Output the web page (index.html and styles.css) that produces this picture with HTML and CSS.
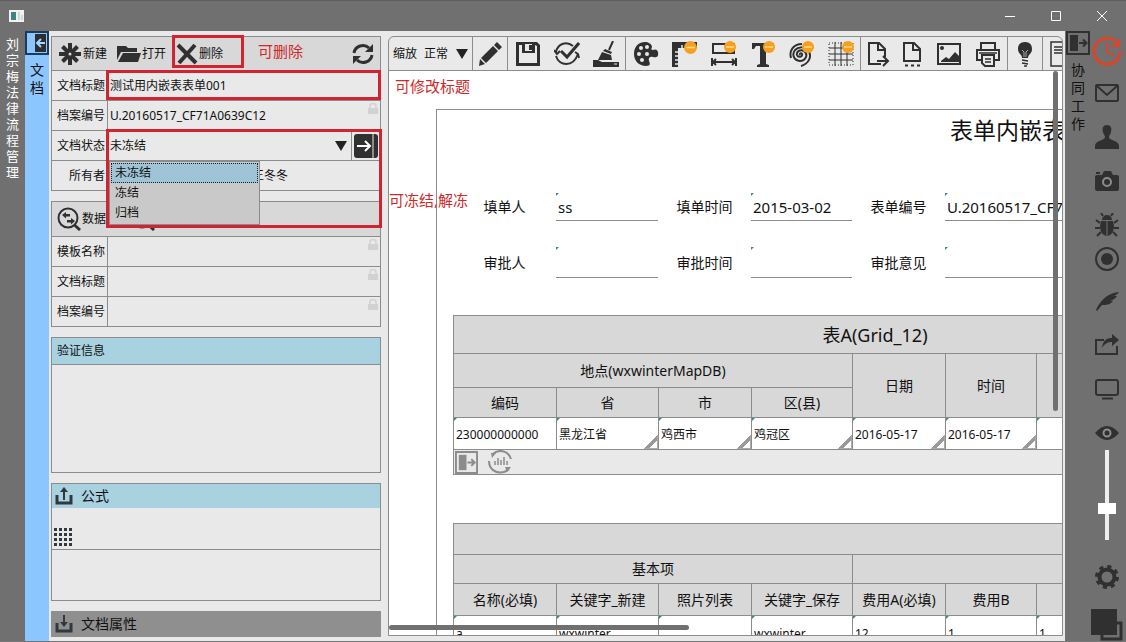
FILE: index.html
```html
<!DOCTYPE html>
<html lang="zh-CN">
<head>
<meta charset="utf-8">
<title>文档</title>
<link rel="stylesheet" href="styles.css">
</head>
<body>
<svg class="defs" aria-hidden="true">
  <symbol id="panel" viewBox="0 0 24 24"><path d="M1 1h22v22H1z" fill="none" stroke="currentColor" stroke-width="2"/><path d="M4 4h8v16H4z" fill="currentColor"/><path d="M13 12h7M17 8.500l3.500 3.500-3.500 3.500" fill="none" stroke="currentColor" stroke-width="2"/></symbol>
  <symbol id="lock" viewBox="0 0 10 11"><path d="M0 5h10v6H0z" fill="currentColor"/><path d="M2 5V3a3 2.500 0 0 1 6 0v2" fill="none" stroke="currentColor" stroke-width="1.500"/></symbol>
  <symbol id="badge" viewBox="0 0 12 12"><circle cx="6" cy="6" r="6" fill="#f6a01e"/><path d="M2 6h8" stroke="#ffd98c" stroke-width="1.500"/></symbol>
  <symbol id="search" viewBox="0 0 24 24"><circle cx="11" cy="11" r="9.500" fill="none" stroke="currentColor" stroke-width="2"/><path d="M17.500 18l5.500 5" stroke="currentColor" stroke-width="3"/><path d="M5 8l4-3v2h4v2.500H9v2zM18 14l-4-3v2h-4v2.500h4v2z" fill="currentColor"/></symbol>
</svg>
<header class="titlebar">
  <svg class="app" viewBox="0 0 15 12"><path d="M0 0h15v12H0z" fill="#f2f2f2"/><path d="M2 2h5v8H2z" fill="#3c8580"/><path d="M9 2h2v8H9zM12 5h2v5h-2z" fill="#cfd8d8"/></svg>
  <div class="winbtns">
    <button aria-label="最小化"><svg viewBox="0 0 12 12"><path d="M1 6.500h10"/></svg></button>
    <button aria-label="最大化"><svg viewBox="0 0 12 12"><path d="M1.500 1.500h9v9h-9z"/></svg></button>
    <button aria-label="关闭"><svg viewBox="0 0 12 12"><path d="M1 1l10 10M11 1L1 11"/></svg></button>
  </div>
</header>
<div class="shell">
  <nav class="rail">刘宗梅法律流程管理</nav>
  <nav class="tabrail">
    <button class="toggle" aria-label="收起"><svg viewBox="0 0 24 24"><path d="M1 1h22v22H1z" fill="none" stroke="#1d3a5c" stroke-width="2"/><path d="M10 3h11v18H10z" fill="#2a2d31"/><path d="M12 12h8M16 8l-4 4 4 4" fill="none" stroke="#a8d4ff" stroke-width="2"/></svg></button>
    <span>文档</span>
  </nav>
  <main class="content">
    <aside class="side">
      <section class="block">
        <div class="tools line">
          <button><svg class="i24" viewBox="0 0 24 24"><path d="M12 1v22M1 12h22M4.500 4.500l15 15M19.500 4.500l-15 15" stroke="currentColor" stroke-width="4"/><circle cx="12" cy="12" r="1.500" fill="#d8d8d8"/></svg>新建</button>
          <button><svg class="i24" viewBox="0 0 24 24"><path d="M0 18V4h9l2 2h9v4H4zM6 11h18l-3 9H1z" fill="currentColor"/></svg>打开</button>
          <button class="del"><svg class="i22" viewBox="0 0 22 22"><path d="M2 2l18 18M19 2L3 20" stroke="currentColor" stroke-width="4"/></svg>删除</button>
          <span class="note">可删除</span>
          <button class="refresh" aria-label="刷新"><svg class="i22" viewBox="0 0 22 22"><path d="M2 10C3 3 12 0 17 5M20 12c-1 7-10 10-15 5" fill="none" stroke="currentColor" stroke-width="3"/><path d="M21 1v8h-8zM1 21v-8h8z" fill="currentColor"/></svg></button>
          <i class="mark mark-del"></i>
        </div>
        <div class="row line"><label for="t1">文档标题</label><input id="t1" value="测试用内嵌表表单001"><i class="mark mark-title"></i></div>
        <div class="row line"><label for="t2">档案编号</label><input id="t2" value="U.20160517_CF71A0639C12"><svg class="lock"><use href="#lock"/></svg></div>
        <div class="row line"><label for="t3">文档状态</label><select id="t3"><option>未冻结</option><option>冻结</option><option>归档</option></select><span class="caret"></span>
          <button class="go" aria-label="执行"><svg viewBox="0 0 24 24"><rect width="24" height="24" rx="3" fill="#303030"/><path d="M3 12h13M11 7l5 5-5 5" fill="none" stroke="#fff" stroke-width="2"/><path d="M19 0v24" stroke="#e9e9e9"/></svg></button>
          <ul class="popup" role="listbox" aria-label="文档状态"><li role="option" aria-selected="true" class="on">未冻结</li><li role="option">冻结</li><li role="option">归档</li></ul>
          <i class="mark mark-state"></i>
        </div>
        <div class="row line"><label for="t4">所有者</label><input id="t4" class="owner" value="王冬冬"></div>
      </section>
      <section class="block">
        <div class="tools data line">
          <button><svg class="i24"><use href="#search"/></svg>数据</button>
          <button aria-label="查询"><svg class="i24"><use href="#search"/></svg></button>
        </div>
        <div class="row line"><label for="d1">模板名称</label><input id="d1"><svg class="lock"><use href="#lock"/></svg></div>
        <div class="row line"><label for="d2">文档标题</label><input id="d2"><svg class="lock"><use href="#lock"/></svg></div>
        <div class="row line"><label for="d3">档案编号</label><input id="d3"><svg class="lock"><use href="#lock"/></svg></div>
      </section>
      <section class="block">
        <h2 class="line">验证信息</h2>
        <div class="verify line"></div>
      </section>
      <section class="block">
        <h2 class="big line"><svg class="i18" viewBox="0 0 18 18"><path d="M2 8v8h14V8" fill="none" stroke="currentColor" stroke-width="3"/><path d="M9 13V4" stroke="currentColor" stroke-width="2"/><path d="M5 5l4-5 4 5z" fill="currentColor"/></svg>公式</h2>
        <div class="formula"><svg class="i18" viewBox="0 0 18 18"><path d="M0 1.500h18M0 6.500h18M0 11.500h18M0 16.500h18" stroke="currentColor" stroke-width="3" stroke-dasharray="3 2"/></svg></div>
        <div class="result line"></div>
      </section>
      <h2 class="big props"><svg class="i18" viewBox="0 0 18 18"><path d="M2 8v8h14V8" fill="none" stroke="currentColor" stroke-width="3"/><path d="M9 0v8" stroke="currentColor" stroke-width="2"/><path d="M5 7l4 5 4-5z" fill="currentColor"/></svg>文档属性</h2>
    </aside>
    <section class="doc">
      <div class="bar">
        <div class="group zoom"><label for="z">缩放</label><select id="z"><option>正常</option></select><span class="caret"></span></div>
        <div class="group"><button class="slim" aria-label="编辑"><svg viewBox="0 0 26 26"><path d="M4 17L16 5l5 5L9 22zM17 4l3-3 5 5-3 3zM3 18l5 5-6 2z" fill="currentColor"/></svg></button></div>
        <div class="group">
          <button aria-label="保存"><svg viewBox="0 0 26 26"><path d="M1 1h21l3 3v21H1zM4 4v18h18V5l-2-1v8H7V4zM10 3v7h7V3z" fill="currentColor" fill-rule="evenodd"/><path d="M14 4h3v5h-3z" fill="currentColor"/></svg></button>
          <button aria-label="校验"><svg viewBox="0 0 26 26"><path d="M2 11C4 2 13 0 19 5M2 15c3 10 17 12 22-2" fill="none" stroke="currentColor" stroke-width="2"/><path d="M0 9l3 4 3-3M21 11l3 2 1 4" fill="none" stroke="currentColor" stroke-width="2"/><path d="M7 10l6 6L25 2" fill="none" stroke="currentColor" stroke-width="3"/></svg></button>
          <button aria-label="清除"><svg viewBox="0 0 26 26"><path d="M20 0l-4 9" stroke="currentColor" stroke-width="2"/><path d="M12 8l7 3-1 2-8-3zM9 11l9 3 1 5H5zM0 19h5l4 2h17v5H0z" fill="currentColor"/><path d="M21 23h3" stroke="#e9e9e9"/></svg></button>
        </div>
        <div class="group">
          <button aria-label="颜色"><svg viewBox="0 0 26 26"><path d="M12 1C5 1 1 6 1 13s5 12 12 12c5 0 4-3 3-5-1-3 1-5 4-4 3 1 6 0 5-5-1-3-3-3-5-2-2 0-2-1-1-3 0-3-4-5-7-5z" fill="currentColor"/><g fill="#e9e9e9"><circle cx="8" cy="7" r="2"/><circle cx="14" cy="6" r="2"/><circle cx="6" cy="13" r="2"/><circle cx="9" cy="19" r="2"/><circle cx="14" cy="13" r="2"/></g></svg></button>
          <button aria-label="标尺"><svg viewBox="0 0 26 26"><path d="M0 1h25v6H6v19H0z" fill="currentColor"/><path d="M3 11h4M3 15h4M3 19h4M3 23h4M10 7V4M14 7V4" stroke="#e9e9e9" stroke-width="1.500"/><use href="#badge" x="12" width="13" height="13"/></svg></button>
          <button aria-label="宽度"><svg viewBox="0 0 26 26"><path d="M2 3h21v9H2zM1 17v8M25 17v8M2 21h22M5 18l-3 3 3 3M21 18l3 3-3 3" fill="none" stroke="currentColor" stroke-width="2"/><use href="#badge" x="13" width="12" height="12"/></svg></button>
          <button aria-label="文字"><svg viewBox="0 0 26 26"><path d="M2 2h22v6h-2l-2-3h-4v18l3 1v2H7v-2l3-1V5H6L4 8H2z" fill="currentColor"/><use href="#badge" x="13" width="12" height="12"/></svg></button>
          <button aria-label="图章"><svg viewBox="0 0 26 26"><path d="M11 14a1 1 0 0 1 2-1c1 3-4 4-5 1-1-4 4-6 7-4 5 4 1 10-4 10-7-1-8-7-5-11 3-3 9-4 13 0 5 7 0 14-7 16M2 17C0 10 4 3 13 3" fill="none" stroke="currentColor" stroke-width="2"/><use href="#badge" x="13" width="12" height="12"/></svg></button>
          <button aria-label="网格"><svg viewBox="0 0 26 26"><path d="M1 7h24M1 13h24M1 19h24M7 1v24M13 1v24M19 1v24" stroke="currentColor"/><path d="M1 2h24v22H1z" fill="none" stroke="currentColor" stroke-dasharray="1 2"/><use href="#badge" x="14" width="12" height="12"/></svg></button>
        </div>
        <div class="group">
          <button class="slim" aria-label="导出"><svg viewBox="0 0 26 26"><path d="M16 23H4V2h10l6 6v8M13 2v7h7M12 20h11M18 15l5 5-5 5" fill="none" stroke="currentColor" stroke-width="2"/></svg></button>
          <button class="slim" aria-label="页面"><svg viewBox="0 0 26 26"><path d="M5 20V2h10l6 6v12zM14 2v7h7" fill="none" stroke="currentColor" stroke-width="2"/><path d="M6 24.500h3M12 24.500h3M18 24.500h3" stroke="currentColor" stroke-width="2"/></svg></button>
          <button aria-label="图片"><svg viewBox="0 0 26 26"><path d="M2 3h22v20H2z" fill="none" stroke="currentColor" stroke-width="2"/><path d="M5 20l5-4 3 2 6-7 4 4v6H5z" fill="currentColor"/><circle cx="6" cy="7" r="2" fill="currentColor"/></svg></button>
          <button aria-label="打印"><svg viewBox="0 0 26 26"><path d="M6 8V2h14v6M6 19H2V9h22v10h-4M7 14h12v11H10l-3-3z" fill="none" stroke="currentColor" stroke-width="2"/><path d="M10 18h6M10 21h6M4 12h18" stroke="currentColor" stroke-width="1.500"/></svg></button>
        </div>
        <div class="group"><button class="slim" aria-label="提示"><svg viewBox="0 0 26 26"><path d="M13 1c-5 0-7 3-7 7 0 5 4 5 4 9h6c0-4 4-4 4-9 0-4-2-7-7-7z" fill="currentColor"/><path d="M10 19l6 1M10 22l6 1M12 25h3" fill="none" stroke="currentColor" stroke-width="1.500"/><path d="M10 9l2 2v5M16 9l-2 2v5" fill="none" stroke="#a8a8a8"/></svg></button></div>
        <div class="group last"><button aria-label="说明"><svg viewBox="0 0 26 26"><path d="M1 1h20v24H1zM4 6h14M4 9h14M4 12h9" fill="none" stroke="currentColor" stroke-width="1.500"/></svg></button></div>
      </div>
      <div class="view">
        <article class="page">
          <h1>表单内嵌表</h1>
          <form class="form">
            <label for="f1">填单人</label><span class="field"><input id="f1" value="ss"></span>
            <label for="f2">填单时间</label><span class="field"><input id="f2" value="2015-03-02"></span>
            <label for="f3">表单编号</label><span class="field"><input id="f3" value="U.20160517_CF71"></span>
            <label for="f4">审批人</label><span class="field"><input id="f4"></span>
            <label for="f5">审批时间</label><span class="field"><input id="f5"></span>
            <label for="f6">审批意见</label><span class="field"><input id="f6"></span>
          </form>
          <table class="grid">
            <colgroup><col class="c103"><col class="c102"><col class="c93"><col class="c101"><col class="c93"><col class="c91"><col></colgroup>
            <thead>
              <tr class="h38"><th colspan="7" class="cap">表A(Grid_12)</th></tr>
              <tr class="h34"><th colspan="4">地点(wxwinterMapDB)</th><th rowspan="2">日期</th><th rowspan="2">时间</th><th rowspan="2"></th></tr>
              <tr class="h30"><th>编码</th><th>省</th><th>市</th><th>区(县)</th></tr>
            </thead>
            <tbody><tr class="h32"><td>230000000000</td><td class="pick">黑龙江省</td><td class="pick">鸡西市</td><td class="pick">鸡冠区</td><td class="pick">2016-05-17</td><td class="pick">2016-05-17</td><td></td></tr></tbody>
            <tfoot><tr class="h25"><th colspan="7"><div class="foot"><button type="button" aria-label="展开"><svg viewBox="0 0 24 24"><use href="#panel"/></svg></button><button type="button" aria-label="图表"><svg viewBox="0 0 24 24"><path d="M5 4C10-1 20 0 23 9M1 11c0 11 12 15 20 8" fill="none" stroke="currentColor" stroke-width="2"/><path d="M7 15v-4M10 15V8M13 15v-5M16 15V7M19 15v-4" stroke="currentColor" stroke-width="1.500"/><path d="M3 3h5L4 8zM17 17h6l-4 5z" fill="currentColor"/></svg></button></div></th></tr></tfoot>
          </table>
          <table class="grid second">
            <colgroup><col class="c103"><col class="c102"><col class="c93"><col class="c101"><col class="c93"><col class="c91"><col></colgroup>
            <thead>
              <tr class="h31"><th colspan="7"></th></tr>
              <tr class="h29"><th colspan="4">基本项</th><th colspan="3"></th></tr>
              <tr class="h32"><th>名称(必填)</th><th>关键字_新建</th><th>照片列表</th><th>关键字_保存</th><th>费用A(必填)</th><th>费用B</th><th></th></tr>
            </thead>
            <tbody><tr class="h34"><td>a</td><td>wxwinter</td><td></td><td>wxwinter</td><td>12</td><td>1</td><td>1</td></tr></tbody>
          </table>
        </article>
        <span class="note note-title">可修改标题</span>
        <span class="note note-state">可冻结,解冻</span>
        <i class="vbar"></i><i class="hbar"></i>
      </div>
    </section>
  </main>
  <nav class="workrail">
    <button class="toggle" aria-label="展开"><svg viewBox="0 0 24 24"><use href="#panel"/></svg></button>
    <span>协同工作</span>
  </nav>
  <nav class="icons">
    <button class="clock" aria-label="时钟"><svg viewBox="0 0 30 30"><path d="M23 5A13 13 0 1 0 28 15" fill="none" stroke="currentColor" stroke-width="3"/><path d="M28 2v9h-9z" fill="currentColor"/><path d="M15 7v9l7 4" fill="none" stroke="currentColor" stroke-width="2"/></svg></button>
    <button aria-label="邮件"><svg viewBox="0 0 24 24"><rect x="1" y="4" width="22" height="16" rx="1" fill="none" stroke="currentColor" stroke-width="2"/><path d="M2 5l10 9 10-9" fill="none" stroke="currentColor" stroke-width="2"/></svg></button>
    <button aria-label="用户"><svg viewBox="0 0 24 24"><path d="M12 0c-4 0-5 3-4 7 0 2 2 3 2 5 0 4-10 3-10 9v3h24v-3c0-6-10-5-10-9 0-2 2-3 2-5 1-4 0-7-4-7z" fill="currentColor"/></svg></button>
    <button aria-label="相机"><svg viewBox="0 0 24 24"><path d="M2 6h5l2-4h7l2 4h4q2 0 2 2v12q0 2-2 2H2q-2 0-2-2V8q0-2 2-2zM1 3h4v2H1z" fill="currentColor"/><circle cx="12" cy="13" r="4" fill="none" stroke="#8c8c8c" stroke-width="2"/></svg></button>
    <button aria-label="调试"><svg viewBox="0 0 24 24"><path d="M7 7a5 5 0 0 1 10 0zM6 8h5.500v15C7 22 5 18 5 13zM18 8h-5.500v15c4.500-1 6.500-5 6.500-10z" fill="currentColor"/><path d="M8 3L6 0M16 3l2-3M5 10L1 7M5 15H0M6 19l-4 4M19 10l4-3M19 15h5M18 19l4 4" stroke="currentColor" stroke-width="2"/></svg></button>
    <button class="short" aria-label="录制"><svg viewBox="0 0 24 24"><circle cx="12" cy="12" r="11" fill="none" stroke="currentColor" stroke-width="2"/><circle cx="12" cy="12" r="6" fill="currentColor"/></svg></button>
    <button aria-label="书写"><svg viewBox="0 0 24 24"><path d="M1 21C4 14 11 4 24 3c-1 2-3 3-5 4h3c-2 3-4 4-7 5h3c-3 4-7 4-11 4l-5 6z" fill="currentColor"/></svg></button>
    <button aria-label="分享"><svg viewBox="0 0 24 24"><path d="M9 7H1v14h21v-8" fill="none" stroke="currentColor" stroke-width="2"/><path d="M7 15c1-8 5-10 10-10V1l7 6-7 6V9c-4 0-7 1-10 6z" fill="currentColor"/></svg></button>
    <button aria-label="屏幕"><svg viewBox="0 0 24 24"><rect x="1" y="3" width="22" height="15" rx="2" fill="none" stroke="currentColor" stroke-width="2"/><path d="M7 21.500h11" stroke="currentColor" stroke-width="2"/></svg></button>
    <button class="eye" aria-label="显示"><svg viewBox="0 0 24 24"><path d="M0 12q12-14 24 0-12 14-24 0z" fill="currentColor"/><circle cx="12" cy="12" r="3.500" fill="none" stroke="#8c8c8c" stroke-width="2"/></svg></button>
    <input class="slider" type="range" aria-label="透明度" min="0" max="100" value="33">
    <button class="gear" aria-label="设置"><svg viewBox="0 0 24 24"><circle cx="12" cy="12" r="7.500" fill="none" stroke="currentColor" stroke-width="4"/><circle cx="12" cy="12" r="10.500" fill="none" stroke="currentColor" stroke-width="3" stroke-dasharray="4.130 4.120"/></svg></button>
    <button class="layers" aria-label="窗口"><svg viewBox="0 0 32 32"><path d="M11 14h19v16H11z" fill="none" stroke="currentColor" stroke-width="3"/><path d="M0 0h26v26H0z" fill="#303030"/></svg></button>
  </nav>
</div>
</body>
</html>
```

FILE: styles.css
```css
* { box-sizing: border-box; }
body {
  margin: 0; height: 100vh; overflow: hidden;
  display: flex; flex-direction: column;
  background: #707070; color: #111;
  font: 12px/18px "Noto Sans", "Noto Sans CJK SC", sans-serif;
}
button, input, select {
  font: inherit; color: inherit; border: 0; padding: 0; margin: 0;
  background: none; appearance: none; outline: 0; border-radius: 0;
}
button { display: flex; align-items: center; justify-content: center; }
svg { display: block; flex: none; }
h1, h2, ul { margin: 0; padding: 0; font-weight: 400; }
.defs { position: absolute; width: 0; height: 0; }

.titlebar { height: 31px; flex: none; display: flex; justify-content: space-between; align-items: center; padding-left: 9px; border-top: 1px solid #5e5e5e; }
.app { width: 15px; height: 12px; }
.winbtns { display: flex; padding-right: 1px; }
.winbtns button { width: 46px; height: 30px; }
.winbtns svg { width: 12px; height: 12px; fill: none; stroke: #fff; }

.shell { flex: 1; display: flex; min-height: 0; border-bottom: 1px solid #777; }
.rail { width: 25px; flex: none; padding: 5px 6px; color: #fff; font-size: 13px; line-height: 16px; word-break: break-all; }
.tabrail, .workrail { width: 24px; flex: none; display: flex; flex-direction: column; align-items: center; font-size: 14px; }
.tabrail { background: #8cc6ff; }
.tabrail span, .workrail span { width: 14px; margin-top: 6px; word-break: break-all; }
.toggle, .toggle svg { width: 24px; height: 24px; }
.workrail { margin-left: 1px; }
.workrail .toggle { color: #303030; }

.content { flex: 1; min-width: 0; display: flex; gap: 7px; padding: 5px 2px; background: #e9e9e9; }
.side { width: 330px; flex: none; color: #111; }
.block { border: solid #8c8c8c; border-width: 0 1px 1px; margin-bottom: 10px; }
.line { border-top: 1px solid #8c8c8c; }
.tools { position: relative; height: 34px; display: flex; align-items: center; gap: 10px; padding: 0 6px; background: #d8d8d8; }
.tools button { gap: 1px; }
.tools svg, .formula, .bar { color: #303030; }
.data { height: 35px; padding-left: 5px; gap: 25px; }
.i24 { width: 24px; height: 24px; }
.i22 { width: 22px; height: 22px; }
.i18 { width: 18px; height: 18px; color: #303840; }
.refresh { margin-left: auto; }
.note { color: #d02828; font-size: 15px; white-space: nowrap; }
.tools .note { margin: -6px 0 0 25px; }
.row { position: relative; height: 30px; display: flex; align-items: stretch; }
.row label { width: 56px; flex: none; padding: 6px 2px 0 0; text-align: right; border-right: 1px solid #8c8c8c; }
.row input, .row select { flex: 1; min-width: 0; padding: 0 2px; }
.row .owner { padding-left: 144px; }
.lock { position: absolute; right: 2px; top: 2px; width: 10px; height: 11px; color: #d2d2d2; }
.caret { align-self: center; border: solid transparent; border-width: 10px 6px 0; border-top-color: #222; }
.go { width: 29px; margin-left: 4px; border-left: 1px solid #8c8c8c; }
.go svg { width: 24px; height: 24px; }
.popup { position: absolute; z-index: 2; left: 57px; top: 30px; width: 151px; list-style: none; background: #c9c9c9; border: 1px solid #8c8c8c; padding: 1px; }
.popup li { padding-left: 4px; line-height: 20px; }
.popup .on { background: #9fc4d6; outline: 1px dotted #123; outline-offset: -1px; }
.mark { position: absolute; z-index: 3; border: 3px solid #d22330; pointer-events: none; }
.mark-del { left: 120px; top: -2px; width: 72px; height: 33px; }
.mark-title { left: 54px; right: -1px; top: -1px; height: 30px; }
.mark-state { left: 54px; right: -2px; top: -2px; height: 99px; }
h2 { height: 27px; display: flex; align-items: center; padding-left: 5px; font-size: 12px; background: #a8d2e0; }
.big { height: 25px; padding-left: 3px; gap: 8px; font-size: 14px; }
.props { height: 26px; padding-left: 4px; background: #8f8f8f; }
.verify { height: 108px; }
.formula { height: 41px; padding: 20px 2px 0; }
.result { height: 51px; }

.doc { flex: 1; min-width: 0; display: flex; flex-direction: column; border: 1px solid #8c8c8c; border-radius: 6px 6px 0 0; overflow: hidden; }
.bar { flex: none; height: 34px; display: flex; border-bottom: 1px solid #8c8c8c; }
.group { display: flex; flex: none; border-right: 1px solid #8c8c8c; }
.last { border: 0; }
.group button { width: 39px; }
.group .slim { width: 34px; }
.group svg { width: 26px; height: 26px; }
.zoom { width: 84px; align-items: center; padding: 0 4px; gap: 7px; color: #111; white-space: nowrap; }
.zoom select { width: 25px; }
.view { position: relative; flex: 1; min-height: 0; overflow: hidden; background: #fff; }
.page { width: 878px; margin: 38px 0 0 47px; padding-left: 16px; border: solid #8c8c8c; border-width: 1px 0 0 1px; }
h1 { font-size: 23px; line-height: 40px; padding-left: 497px; }
.form { margin: 43px 0 37px; display: grid; grid-template-columns: 103px 102px 93px 101px 93px 1fr; grid-template-rows: 28px 31px; row-gap: 26px; font-size: 14px; }
.form label { display: flex; align-items: center; justify-content: center; }
.field { position: relative; display: flex; border-bottom: 1px solid #8c8c8c; }
.field input { flex: 1; min-width: 0; padding: 0 2px; font-size: 15px; }
.field::before, td::before { content: ""; position: absolute; left: 0; top: 0; border-top: 3px solid #3c8a80; border-right: 3px solid transparent; }
.grid { width: 844px; table-layout: fixed; border-collapse: collapse; }
.second { margin-top: 48px; }
.c91 { width: 91px; } .c93 { width: 93px; } .c101 { width: 101px; } .c102 { width: 102px; } .c103 { width: 103px; }
.h25 { height: 25px; } .h29 { height: 29px; } .h30 { height: 30px; } .h31 { height: 31px; }
.h32 { height: 32px; } .h34 { height: 34px; } .h38 { height: 38px; }
th, td { position: relative; padding: 0 2px; border: 1px solid #8c8c8c; }
td { padding-top: 2px; }
th { background: #d8d8d8; font-size: 14px; font-weight: 400; }
.cap { font-size: 18px; }
tfoot th { background: #e9e9e9; padding: 0 1px; }
.foot { display: flex; gap: 10px; color: #8c8c8c; }
.foot svg { width: 23px; height: 23px; }
.foot button + button svg { width: 24px; height: 24px; }
.pick::after { content: ""; position: absolute; right: 0; bottom: 0; width: 13px; height: 13px; background: linear-gradient(135deg, transparent 50%, #999 50% 72%, #fff 72%); border: solid #aaa; border-width: 0 1px 1px 0; }
.note-title, .note-state { position: absolute; left: 6px; top: 6px; }
.note-state { left: 0; top: 120px; }
.vbar, .hbar { position: absolute; background: #707070; border-radius: 3px; }
.vbar { right: 4px; top: 0; width: 5px; height: 340px; }
.hbar { left: 0; bottom: 5px; width: 300px; height: 5px; }

.icons { width: 36px; flex: none; display: flex; flex-direction: column; align-items: center; color: #303030; padding-right: 2px; }
.icons button { height: 44px; flex: none; }
.icons svg { width: 24px; height: 24px; }
.icons .clock { height: 40px; color: #dc4428; }
.icons .clock svg { width: 30px; height: 30px; }
.icons .short { height: 24px; margin-bottom: 8px; }
.icons .eye { height: 39px; padding-top: 4px; }
.slider { flex: none; width: 18px; height: 90px; writing-mode: vertical-lr; direction: rtl; background: linear-gradient(#eee, #eee) center / 4px 100% no-repeat; }
.slider::-webkit-slider-thumb { appearance: none; width: 18px; height: 11px; background: #fff; }
.icons .gear { height: 69px; padding-top: 4px; }
.icons .layers { height: 32px; }
.icons .layers svg { width: 32px; height: 32px; }
```
